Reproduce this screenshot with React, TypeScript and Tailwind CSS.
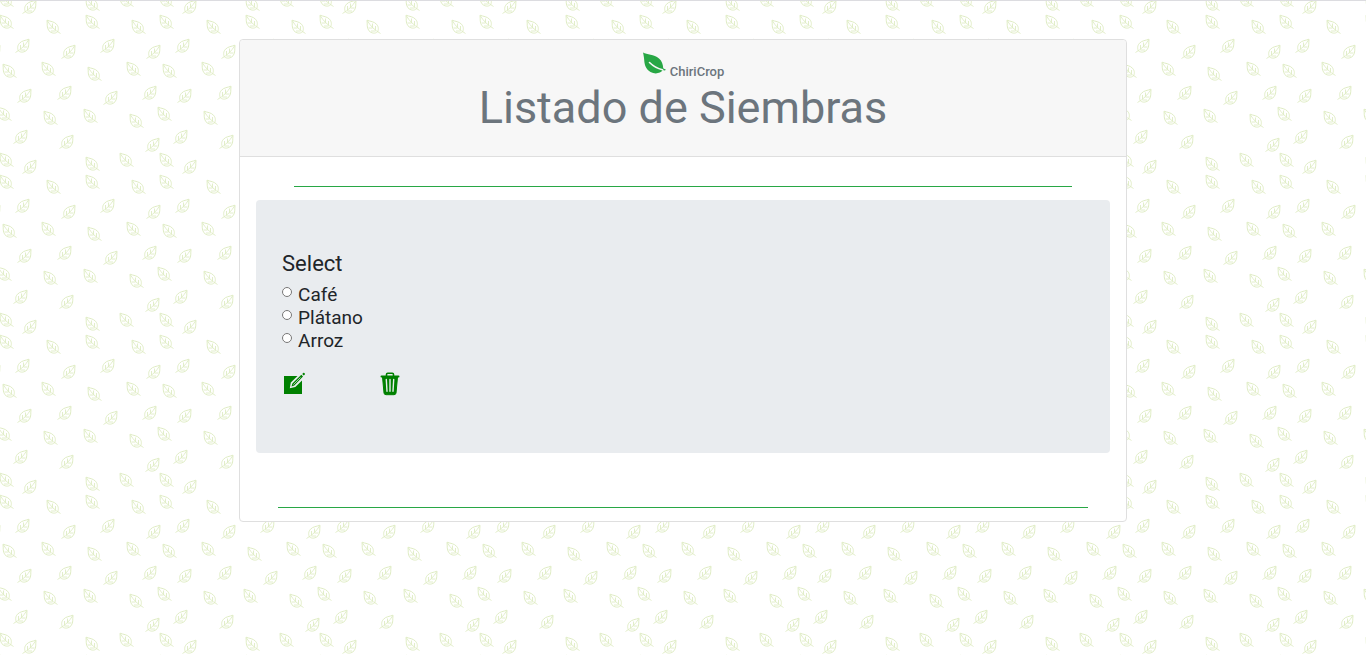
import React from "react";

type Point = [number, number];

const leftLeaves: Point[] = [
  [6, 0], [6, 160], [166, 160], [166, 0], [92, 4], [92, 164], [126, 0], [126, 160],
  [6, 22], [166, 22], [92, 22], [53, 27], [138, 27],
  [9, 71], [48, 69], [94, 74], [133, 69],
  [4, 114], [164, 114], [50, 118], [90, 116], [136, 121],
];

const rightLeaves: Point[] = [
  [30, 7], [30, 167], [23, 46], [69, 52], [108, 46], [154, 52], [-6, 52],
  [25, 96], [65, 93], [111, 98], [150, 93],
  [21, 137], [67, 142], [153, 145],
];

function LeafBackground() {
  return (
    <svg className="absolute inset-0 -z-10 h-full w-full" aria-hidden="true">
      <defs>
        <g id="leaf" fill="none" stroke="#dfecc4">
          <path d="M-6-6.800C-2.500-5.500 1-5.500 3.500-2.800C6 0 5.500 3 4.500 5C2 6.800-1.500 6.500-4 3.800C-6.500 1-5.500-3-6-6.800Z" />
          <path d="M-5.500-6C-2.500-1 1.500 3 7.500 6.500M-.5 1V-3.500M2.500 3.500V-1M-.5 1H-4.500M2.500 4H-2" strokeWidth=".9" />
        </g>
        <pattern id="leaves" y="-1" width="160" height="160" patternUnits="userSpaceOnUse">
          {leftLeaves.map(([x, y]) => (
            <use key={`l${x},${y}`} href="#leaf" transform={`translate(${x} ${y})`} />
          ))}
          {rightLeaves.map(([x, y]) => (
            <use key={`r${x},${y}`} href="#leaf" transform={`translate(${x} ${y}) scale(-1 1)`} />
          ))}
        </pattern>
      </defs>
      <rect width="100%" height="100%" fill="url(#leaves)" />
    </svg>
  );
}

function LeafLogo() {
  return (
    <svg className="h-6 w-6" viewBox="0 0 24 24" aria-hidden="true">
      <path
        fill="#28a745"
        d="M1 .5C5 3 12 2 17 6.500C20 9 21 12.500 21.200 16.200C22 16.900 23 17.300 23.800 17.500C23.500 18.600 22.500 18.700 20.800 18.100C18.500 21.500 13 22.500 8.500 20C3.500 17 2.500 12.500 2.200 8C2 5 1.500 2.500 1 .5Z"
      />
      <path fill="none" stroke="#f7f7f7" strokeWidth="1.600" strokeLinecap="round" d="M7.500 10.500C11 14 15 16.500 20.500 17.800" />
    </svg>
  );
}

function EditIcon() {
  return (
    <svg className="h-6 w-6" viewBox="0 0 24 24" fill="#008000" aria-hidden="true">
      <path d="M2 4H20V22H2Z" />
      <path fill="#e9ecef" d="M15.500 4L8.800 10.500L7.800 16.200L13.300 15L20 8.500L24 5V0H19V4Z" />
      <path d="M9.500 14.500L10.400 11.500L19.300 2.700L21 4.400L12.300 13.400ZM20.200 1.900L21.500 .8Q22.300 .6 22.800 1.400Q23.200 2.200 22.800 2.600L21.800 3.600Z" />
      <path fill="none" stroke="#e9ecef" strokeWidth=".7" d="M11.400 12.600L18.500 5.500" />
    </svg>
  );
}

function TrashIcon() {
  return (
    <svg className="h-6 w-6" viewBox="0 0 24 24" fill="none" stroke="#008000" aria-hidden="true">
      <path strokeWidth="1.600" d="M8.500 4V2.500Q8.500 1.300 9.700 1.300H14.300Q15.500 1.300 15.500 2.500V4" />
      <path strokeWidth="2" strokeLinecap="round" d="M3.500 4.500H20.500" />
      <path fill="#008000" d="M4.500 5H19.500L18 21Q17.800 22.700 16 22.700H8Q6.200 22.700 6 21Z" />
      <path stroke="#e9ecef" strokeWidth="1.400" strokeLinecap="round" d="M8.300 7.500L9 19.300M12 7.500V19.300M15.700 7.500L15 19.300" />
    </svg>
  );
}

const crops = ["Café", "Plátano", "Arroz"];

export default function App() {
  return (
    <div className="relative isolate min-h-screen border-t border-[#dcdce0] bg-white pt-[38px] font-[Roboto,sans-serif] text-[#212529]">
      <LeafBackground />
      <main className="mx-auto w-[65%] rounded border border-[#dfdfdf] bg-white">
        <header className="rounded-t border-b border-[#dfdfdf] bg-[#f7f7f7] px-5 pt-3 pb-[22px] text-center text-[#6c757d]">
          <div className="flex items-start justify-center gap-1">
            <LeafLogo />
            <span className="pt-3 text-[13px] leading-4 font-medium">ChiriCrop</span>
          </div>
          <h1 className="mt-[2px] text-[45px] leading-[52px]">Listado de Siembras</h1>
        </header>
        <div className="px-4 pt-[29px] pb-[13px]">
          <hr className="mx-[38px] h-px border-0 bg-[#28a745]" />
          <form className="mt-[13px] rounded bg-[#e9ecef] px-[26px] pt-12 pb-[57px]">
            <fieldset>
              <legend className="mb-1 text-[22px] leading-8">Select</legend>
              {crops.map((crop) => (
                <label key={crop} className="flex h-[23px] items-center gap-[6px] text-[19px]">
                  <input type="radio" name="crop" className="mb-2 h-[10px] w-[10px]" />
                  {crop}
                </label>
              ))}
            </fieldset>
            <div className="mt-[19px] flex gap-[72px]">
              <button type="button" aria-label="Editar"><EditIcon /></button>
              <button type="button" aria-label="Eliminar"><TrashIcon /></button>
            </div>
          </form>
          <hr className="mx-[22px] mt-[54px] h-px border-0 bg-[#28a745]" />
        </div>
      </main>
    </div>
  );
}
